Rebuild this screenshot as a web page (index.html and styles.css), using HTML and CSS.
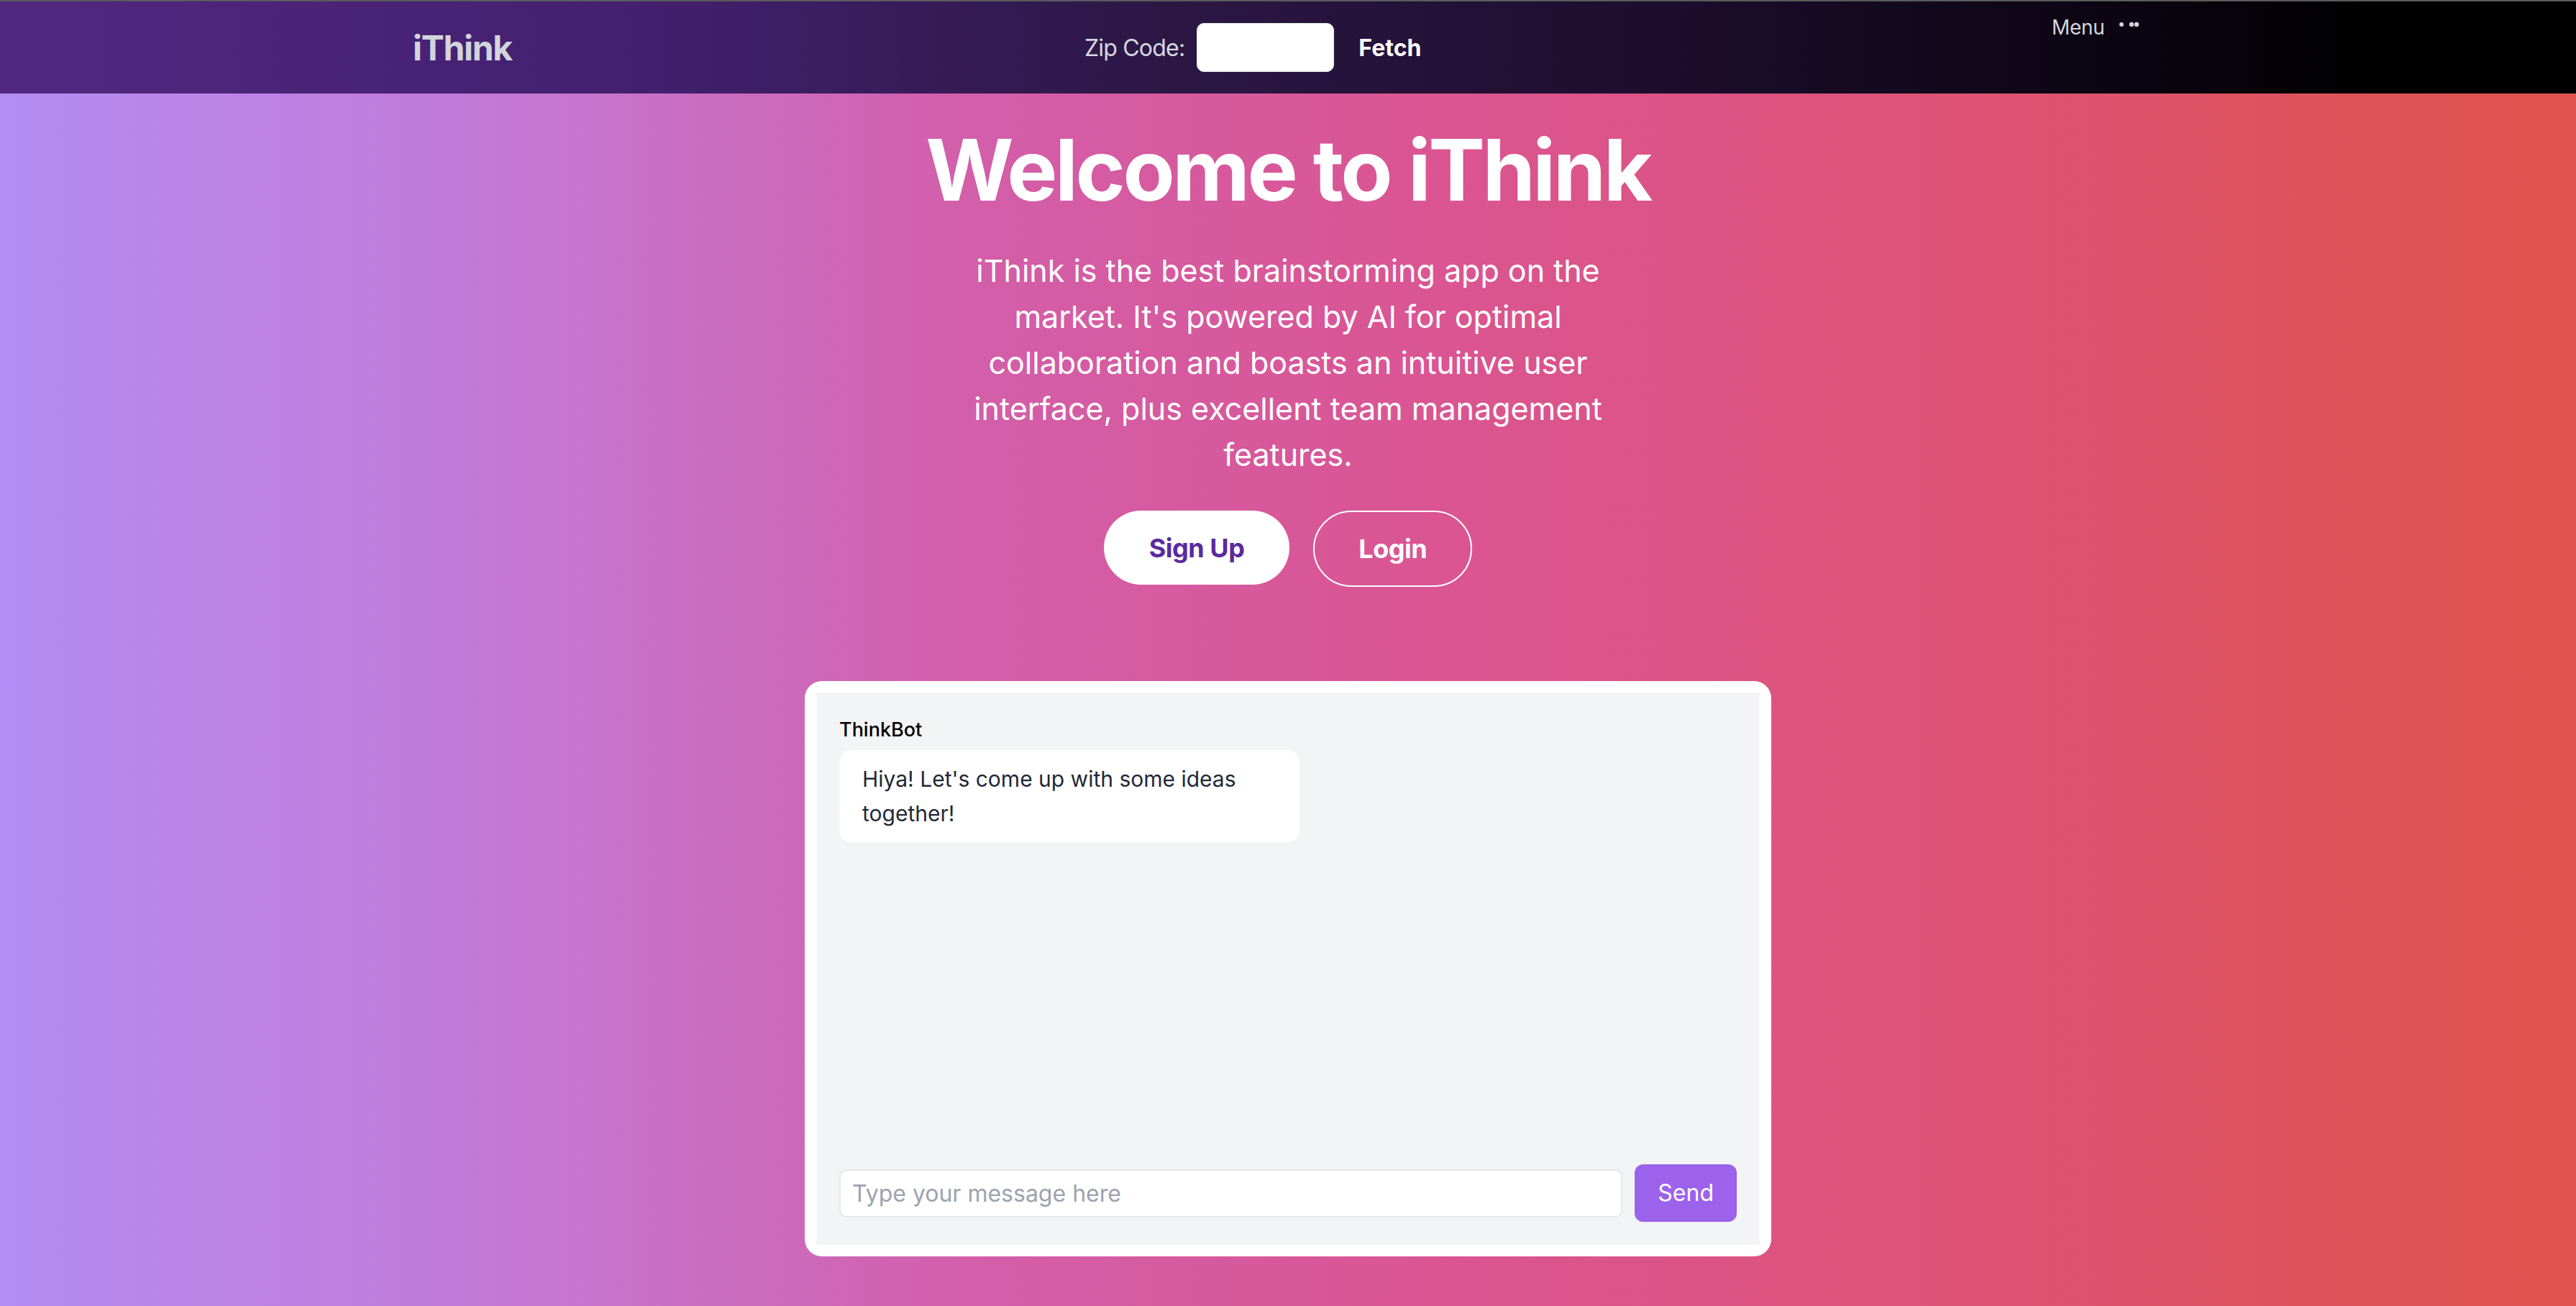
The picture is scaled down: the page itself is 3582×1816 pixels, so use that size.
FILE: index.html
```html
<!DOCTYPE html>
<html lang="en">
<head>
<meta charset="utf-8">
<title>iThink</title>
<link rel="stylesheet" href="styles.css">
</head>
<body>
<header class="nav">
  <a class="logo" href="#">iThink</a>
  <div class="zip">
    <label class="zip-label" for="zip">Zip Code:</label>
    <input class="zip-input" id="zip" type="text">
    <button class="fetch">Fetch</button>
  </div>
  <div class="menu">
    <span>Menu</span>
    <svg class="dots" width="30" height="8" viewBox="0 0 30 8"><circle cx="4" cy="4" r="3" fill="#d1d5db"/><circle cx="18" cy="4" r="3.2" fill="#d1d5db"/><circle cx="25" cy="4" r="3.2" fill="#d1d5db"/></svg>
  </div>
</header>
<main class="hero">
  <h1 class="title">Welcome to iThink</h1>
  <p class="lead">iThink is the best brainstorming app on the market. It's powered by AI for optimal collaboration and boasts an intuitive user interface, plus excellent team management features.</p>
  <div class="actions">
    <a class="btn btn-primary" href="#">Sign Up</a>
    <a class="btn btn-outline" href="#">Login</a>
  </div>
  <section class="chat">
    <div class="chat-inner">
      <div class="messages">
        <div class="sender">ThinkBot</div>
        <div class="bubble">Hiya! Let's come up with some ideas together!</div>
      </div>
      <div class="composer">
        <input class="msg-input" type="text" placeholder="Type your message here">
        <button class="send">Send</button>
      </div>
    </div>
  </section>
</main>
</body>
</html>
```
FILE: styles.css
```css
* { box-sizing: border-box; }
html, body { margin: 0; padding: 0; }
body {
  min-height: 1816px;
  font-family: Inter, "Noto Sans", "Liberation Sans", sans-serif;
  border-top: 2px solid #5b5b5d;
  background: linear-gradient(to right, #b48cf4 0%, #c478d4 20%, #d35ea9 38%, #da5593 55%, #dd5378 75%, #e0524a 100%);
}
.nav {
  height: 128px;
  display: grid;
  grid-template-columns: 934px 1345px auto;
  align-items: center;
  padding-left: 574px;
  background: linear-gradient(to right, #522780 0%, #43206f 25%, #2c1745 45%, #1c0d2c 65%, #0b0512 82%, #000 92%);
}
.logo {
  font-size: 48px;
  font-weight: 700;
  color: #d1d5db;
  text-decoration: none;
  letter-spacing: -1.3px;
}
.zip {
  display: flex;
  align-items: center;
}
.zip-label {
  font-size: 32px;
  color: #d8d8e0;
  margin-right: 17px;
  letter-spacing: -0.8px;
}
.zip-input {
  width: 191px;
  height: 68px;
  border: 1px solid #e5e7eb;
  border-radius: 10px;
  background: #fff;
  margin-right: 34px;
}
.fetch {
  font-family: inherit;
  font-size: 32px;
  font-weight: 700;
  color: #fff;
  background: none;
  border: 0;
  padding: 0;
}
.menu {
  align-self: start;
  margin-top: 16px;
  display: flex;
  align-items: flex-start;
  font-size: 28px;
  line-height: 40px;
  color: #d1d5db;
  letter-spacing: -0.3px;
}
.dots { margin-left: 19px; margin-top: 12px; }
.hero {
  padding-top: 47px;
  text-align: center;
  color: #fff;
}
.title {
  margin: 0;
  font-size: 118px;
  line-height: 118px;
  font-weight: 700;
  letter-spacing: -3.5px;
}
.lead {
  width: 900px;
  margin: 49px auto 0;
  font-size: 43px;
  line-height: 64px;
}
.actions {
  margin-top: 46px;
  display: flex;
  justify-content: center;
  align-items: flex-start;
  gap: 33px;
}
.btn {
  display: inline-block;
  font-size: 36px;
  line-height: 56px;
  font-weight: 700;
  text-decoration: none;
  border-radius: 999px;
  letter-spacing: -0.5px;
}
.btn-primary {
  background: #fff;
  color: #5b2a9f;
  padding: 24px 63px 23px;
}
.btn-outline {
  color: #fff;
  border: 2px solid #fff;
  padding: 23px 61px;
}
.chat {
  width: 1344px;
  height: 800px;
  margin: 131px auto 0;
  padding: 16px;
  background: #fff;
  border-radius: 24px;
  text-align: left;
}
.chat-inner {
  height: 100%;
  background: #f3f4f6;
  padding: 32px;
  display: flex;
  flex-direction: column;
}
.messages { flex: 1; }
.sender {
  font-size: 27px;
  line-height: 40px;
  font-weight: 500;
  color: #000;
  margin-bottom: 8px;
}
.bubble {
  max-width: 640px;
  background: #fff;
  border-radius: 16px;
  padding: 16px 32px;
  font-size: 30px;
  line-height: 48px;
  color: #1f2937;
}
.composer {
  display: flex;
  align-items: center;
  gap: 17px;
}
.msg-input {
  flex: 1;
  height: 67px;
  border: 2px solid #e5e7eb;
  border-radius: 10px;
  padding: 0 16px;
  font-family: inherit;
  font-size: 32px;
  background: #fff;
}
.msg-input::placeholder { color: #9ca3af; }
.send {
  font-family: inherit;
  font-size: 32px;
  line-height: 48px;
  color: #fff;
  background: #9c62eb;
  border: 0;
  border-radius: 12px;
  padding: 16px 32px;
}
```
